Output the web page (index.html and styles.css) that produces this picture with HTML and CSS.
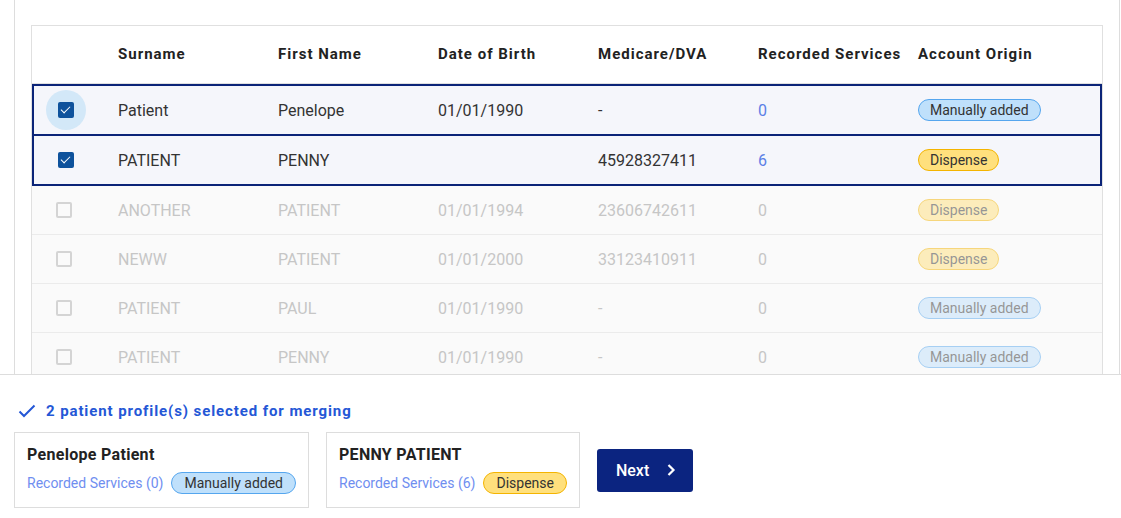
FILE: index.html
```html
<!DOCTYPE html>
<html lang="en">
<head>
    <meta charset="UTF-8">
    <meta name="viewport" content="width=device-width, initial-scale=1.0">
    <title>Merge Patient Profiles</title>
    <link rel="stylesheet" href="styles.css">
</head>
<body>
    <div class="panel">
        <div class="patients">
            <div class="row head">
                <div class="cell"></div>
                <div class="cell">Surname</div>
                <div class="cell">First Name</div>
                <div class="cell">Date of Birth</div>
                <div class="cell">Medicare/DVA</div>
                <div class="cell">Recorded Services</div>
                <div class="cell">Account Origin</div>
            </div>

            <div class="row selected">
                <div class="cell"><span class="check-wrap focus"><span class="box checked"></span></span></div>
                <div class="cell">Patient</div>
                <div class="cell">Penelope</div>
                <div class="cell">01/01/1990</div>
                <div class="cell">-</div>
                <div class="cell count">0</div>
                <div class="cell"><span class="badge manual">Manually added</span></div>
            </div>
            <div class="row selected">
                <div class="cell"><span class="check-wrap"><span class="box checked"></span></span></div>
                <div class="cell">PATIENT</div>
                <div class="cell">PENNY</div>
                <div class="cell"></div>
                <div class="cell">45928327411</div>
                <div class="cell count">6</div>
                <div class="cell"><span class="badge dispense">Dispense</span></div>
            </div>

            <div class="row disabled">
                <div class="cell"><span class="check-wrap"><span class="box"></span></span></div>
                <div class="cell">ANOTHER</div>
                <div class="cell">PATIENT</div>
                <div class="cell">01/01/1994</div>
                <div class="cell">23606742611</div>
                <div class="cell">0</div>
                <div class="cell"><span class="badge dispense">Dispense</span></div>
            </div>
            <div class="row disabled">
                <div class="cell"><span class="check-wrap"><span class="box"></span></span></div>
                <div class="cell">NEWW</div>
                <div class="cell">PATIENT</div>
                <div class="cell">01/01/2000</div>
                <div class="cell">33123410911</div>
                <div class="cell">0</div>
                <div class="cell"><span class="badge dispense">Dispense</span></div>
            </div>
            <div class="row disabled">
                <div class="cell"><span class="check-wrap"><span class="box"></span></span></div>
                <div class="cell">PATIENT</div>
                <div class="cell">PAUL</div>
                <div class="cell">01/01/1990</div>
                <div class="cell">-</div>
                <div class="cell">0</div>
                <div class="cell"><span class="badge manual">Manually added</span></div>
            </div>
            <div class="row disabled">
                <div class="cell"><span class="check-wrap"><span class="box"></span></span></div>
                <div class="cell">PATIENT</div>
                <div class="cell">PENNY</div>
                <div class="cell">01/01/1990</div>
                <div class="cell">-</div>
                <div class="cell">0</div>
                <div class="cell"><span class="badge manual">Manually added</span></div>
            </div>
        </div>
    </div>

    <div class="footer">
        <div class="message">
            <svg width="18" height="14" viewBox="0 0 18 14"><polyline points="1.5,7.5 6,12 16.5,1.5" fill="none" stroke="#2457d6" stroke-width="2"/></svg>
            <span>2 patient profile(s) selected for merging</span>
        </div>
        <div class="summary">
            <div class="card">
                <div class="card-name">Penelope Patient</div>
                <div class="card-meta">
                    <span class="services">Recorded Services (0)</span>
                    <span class="badge manual">Manually added</span>
                </div>
            </div>
            <div class="card">
                <div class="card-name">PENNY PATIENT</div>
                <div class="card-meta">
                    <span class="services">Recorded Services (6)</span>
                    <span class="badge dispense">Dispense</span>
                </div>
            </div>
            <button class="next">Next
                <svg width="10" height="14" viewBox="0 0 10 14"><polyline points="2.5,2 7.5,7 2.5,12" fill="none" stroke="#fff" stroke-width="2.2"/></svg>
            </button>
        </div>
    </div>
</body>
</html>
```

FILE: styles.css
```css
body {
    font-family: Roboto, "Noto Sans", Arial, sans-serif;
    background-color: #fff;
    color: #333;
    margin: 0;
}
.panel {
    margin-left: 14px;
    width: 1072px;
    height: 349px;
    padding: 25px 16px 0;
    border-left: 1px solid #ddd;
    border-right: 1px solid #ddd;
    overflow: hidden;
}
.patients {
    border: 1px solid #e0e0e0;
    background: #fafafa;
}
.row {
    display: grid;
    grid-template-columns: 86px repeat(6, 160px) 1fr;
    align-items: center;
    height: 48px;
    font-size: 16px;
    border-bottom: 1px solid #ebebeb;
}
.row.head {
    height: 55px;
    padding-bottom: 2px;
    background: #fff;
    font-size: 15px;
    font-weight: 700;
    letter-spacing: 1px;
    color: #222;
    border-bottom: 1px solid #e0e0e0;
}
.row.selected {
    grid-template-columns: 84px repeat(6, 160px) 1fr;
    background: #f5f6fb;
    border: 2px solid #0b2478;
    color: #333;
}
.row.selected + .row.selected {
    border-top: none;
}
.row.disabled {
    color: #c6c6c6;
}
.row.disabled .badge {
    opacity: 0.5;
}
.count {
    color: #5b80e6;
}
.check-wrap {
    display: flex;
    align-items: center;
    justify-content: center;
    width: 40px;
    height: 40px;
    margin-left: 12px;
    border-radius: 50%;
}
.check-wrap.focus {
    background: #d3e8f8;
}
.box {
    width: 16px;
    height: 16px;
    box-sizing: border-box;
    border: 2px solid #d4d4d4;
    border-radius: 2px;
}
.box.checked {
    border: none;
    background: #0e529c;
    position: relative;
}
.box.checked::after {
    content: "";
    position: absolute;
    left: 5px;
    top: 2px;
    width: 4px;
    height: 8px;
    border: solid #fff;
    border-width: 0 1.5px 1.5px 0;
    transform: rotate(45deg);
}
.badge {
    display: inline-block;
    font-size: 14px;
    line-height: 20px;
    padding: 0 11px;
    border-radius: 12px;
    border: 1px solid;
    color: #333;
}
.badge.manual {
    background: #bfe0fb;
    border-color: #55a6ee;
}
.badge.dispense {
    background: #ffe07d;
    border-color: #f4b400;
}
.footer {
    border-top: 1px solid #ddd;
    padding: 26px 14px 10px;
}
.message {
    display: flex;
    align-items: center;
    gap: 10px;
    padding-left: 4px;
    font-size: 15px;
    font-weight: 700;
    letter-spacing: 0.9px;
    line-height: 20px;
    color: #2457d6;
}
.summary {
    display: flex;
    align-items: center;
    gap: 17px;
    margin-top: 11px;
}
.card {
    border: 1px solid #ddd;
    padding: 12px 12px 13px 12px;
}
.card-name {
    font-size: 16px;
    font-weight: 700;
    letter-spacing: 0.3px;
    color: #222;
    line-height: 20px;
}
.card-meta {
    display: flex;
    align-items: center;
    gap: 8px;
    margin-top: 7px;
    font-size: 14px;
}
.card-meta .badge {
    padding: 0 12px;
}
.services {
    color: #6f8ef0;
}
.next {
    display: flex;
    align-items: center;
    gap: 17px;
    height: 43px;
    padding: 0 17px 0 19px;
    background-color: #0b2480;
    color: #fff;
    border: none;
    border-radius: 3px;
    font-family: inherit;
    font-size: 16px;
    font-weight: 500;
    cursor: pointer;
}
```
